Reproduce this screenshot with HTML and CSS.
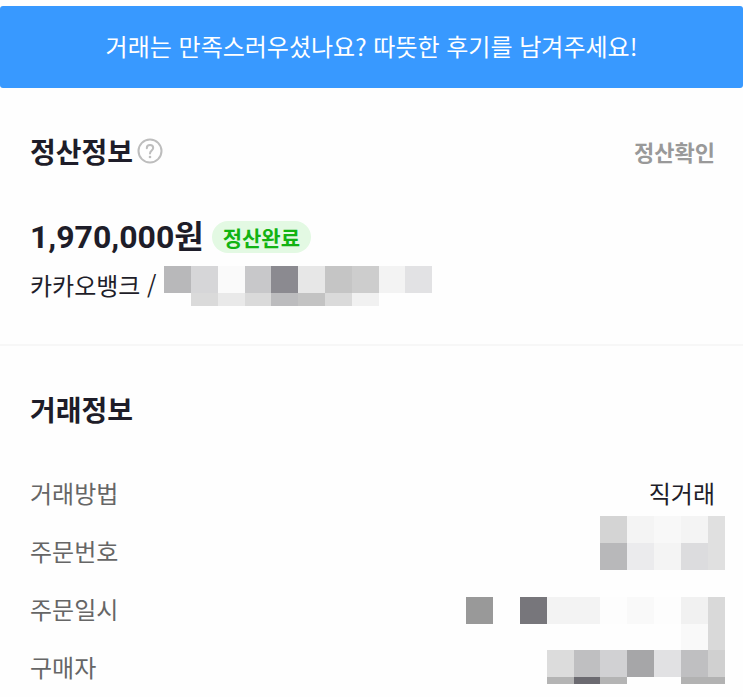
FILE: index.html
```html
<!DOCTYPE html>
<html lang="ko">
<head>
  <meta charset="UTF-8">
  <meta name="viewport" content="width=device-width, initial-scale=1.0">
  <title>거래 상세</title>
  <link rel="stylesheet" href="styles.css">
</head>
<body>

  <!-- Review banner -->
  <button type="button" class="review-banner">거래는 만족스러우셨나요? 따뜻한 후기를 남겨주세요!</button>

  <main>
    <!-- Settlement -->
    <section class="settlement">
      <div class="section-head">
        <h2>정산정보</h2>
        <button type="button" class="help-btn" aria-label="도움말">
          <svg width="26" height="26" viewBox="0 0 26 26" fill="none" stroke="#bdbdbd" stroke-width="2">
            <circle cx="13" cy="13" r="11.5"/>
            <path d="M9.8 10.2C9.8 8.2 11.1 7 13 7s3.2 1.2 3.2 3c0 2.4-3.2 2.6-3.2 5.4" stroke-linecap="round"/>
            <circle cx="13" cy="19" r="1.3" fill="#bdbdbd" stroke="none"/>
          </svg>
        </button>
        <button type="button" class="check-btn">정산확인</button>
      </div>
      <div class="amount-row">
        <strong class="amount">1,970,000원</strong>
        <span class="badge">정산완료</span>
      </div>
      <div class="account">
        <span>카카오뱅크 /</span>
        <svg class="account-mask" width="268" height="40" viewBox="0 0 268 40" shape-rendering="crispEdges" aria-hidden="true">
          <rect x="0" y="0" width="27" height="27" fill="#b8b8ba"/>
          <rect x="27" y="0" width="27" height="27" fill="#d6d6d8"/>
          <rect x="54" y="0" width="27" height="27" fill="#fafafa"/>
          <rect x="81" y="0" width="26" height="27" fill="#c8c8ca"/>
          <rect x="107" y="0" width="27" height="27" fill="#8b8a90"/>
          <rect x="134" y="0" width="27" height="27" fill="#e7e7e7"/>
          <rect x="161" y="0" width="27" height="27" fill="#c5c5c5"/>
          <rect x="188" y="0" width="27" height="27" fill="#cdcdcd"/>
          <rect x="215" y="0" width="26" height="27" fill="#f3f3f3"/>
          <rect x="241" y="0" width="27" height="27" fill="#e2e2e4"/>
          <rect x="27" y="27" width="27" height="13" fill="#dadada"/>
          <rect x="54" y="27" width="27" height="13" fill="#e9e9e9"/>
          <rect x="81" y="27" width="26" height="13" fill="#dadada"/>
          <rect x="107" y="27" width="27" height="13" fill="#bcbcbe"/>
          <rect x="134" y="27" width="27" height="13" fill="#c3c3c3"/>
          <rect x="161" y="27" width="27" height="13" fill="#dadada"/>
          <rect x="188" y="27" width="27" height="13" fill="#f1f1f1"/>
        </svg>
      </div>
    </section>

    <!-- Deal -->
    <section class="deal">
      <div class="section-head">
        <h2>거래정보</h2>
      </div>
      <dl class="deal-list">
        <div class="deal-row"><dt>거래방법</dt><dd>직거래</dd></div>
        <div class="deal-row"><dt>주문번호</dt><dd></dd></div>
        <div class="deal-row"><dt>주문일시</dt><dd></dd></div>
        <div class="deal-row"><dt>구매자</dt><dd></dd></div>
      </dl>
      <!-- hides the private values -->
      <svg class="deal-mask" width="259" height="168" viewBox="0 0 259 168" shape-rendering="crispEdges" aria-hidden="true">
        <!-- order number -->
        <rect x="134" y="0" width="27" height="27" fill="#d4d4d4"/>
        <rect x="161" y="0" width="27" height="27" fill="#f4f4f4"/>
        <rect x="188" y="0" width="27" height="27" fill="#f8f8f8"/>
        <rect x="215" y="0" width="27" height="27" fill="#f4f4f4"/>
        <rect x="242" y="0" width="17" height="54" fill="#e0e0e0"/>
        <rect x="134" y="27" width="27" height="27" fill="#b8b8ba"/>
        <rect x="161" y="27" width="27" height="27" fill="#ebebed"/>
        <rect x="188" y="27" width="27" height="27" fill="#f4f4f4"/>
        <rect x="215" y="27" width="27" height="27" fill="#dcdcde"/>
        <!-- order date -->
        <rect x="0" y="81" width="27" height="27" fill="#999999"/>
        <rect x="54" y="81" width="27" height="27" fill="#77767b"/>
        <rect x="81" y="81" width="53" height="27" fill="#f3f3f3"/>
        <rect x="134" y="81" width="27" height="27" fill="#fdfdfd"/>
        <rect x="161" y="81" width="27" height="27" fill="#f9f9f9"/>
        <rect x="188" y="81" width="27" height="27" fill="#fdfdfd"/>
        <rect x="215" y="81" width="27" height="27" fill="#f1f1f1"/>
        <rect x="215" y="108" width="27" height="26" fill="#f9f9f9"/>
        <rect x="242" y="81" width="17" height="53" fill="#d9d9d9"/>
        <!-- buyer -->
        <rect x="81" y="134" width="27" height="27" fill="#dcdcdc"/>
        <rect x="108" y="134" width="26" height="27" fill="#bfbfc1"/>
        <rect x="134" y="134" width="27" height="27" fill="#d1d1d3"/>
        <rect x="161" y="134" width="27" height="27" fill="#a6a6a8"/>
        <rect x="188" y="134" width="27" height="27" fill="#e1e1e3"/>
        <rect x="215" y="134" width="27" height="27" fill="#bfbfc1"/>
        <rect x="242" y="134" width="17" height="27" fill="#d0d0d0"/>
        <rect x="81" y="161" width="27" height="7" fill="#b4b4b4"/>
        <rect x="108" y="161" width="26" height="7" fill="#6b6a70"/>
        <rect x="134" y="161" width="27" height="7" fill="#b4b4b4"/>
        <rect x="215" y="161" width="44" height="7" fill="#b2b2b2"/>
      </svg>
    </section>
  </main>

</body>
</html>
```
FILE: styles.css
```css
* {
  box-sizing: border-box;
}
body {
  margin: 0;
  padding-top: 6px;
  background-color: #fefefe;
  color: #1e1d29;
  font-family: "Noto Sans CJK KR", sans-serif;
  font-size: 24px;
}
button {
  border: none;
  padding: 0;
  background: none;
  font-family: inherit;
  cursor: pointer;
}
.review-banner {
  display: block;
  width: 100%;
  padding: 22px 16px 24px;
  border-radius: 3px;
  background-color: #3899ff;
  color: #fff;
  font-size: 24px;
  line-height: 36px;
}
.settlement {
  padding: 42px 28px 38px 30px;
  border-bottom: 2px solid #f7f7f7;
}
.deal {
  position: relative;
  padding: 42px 28px 0 30px;
}
.section-head {
  display: flex;
  align-items: center;
  gap: 4px;
}
h2 {
  margin: 0;
  font-size: 28px;
  font-weight: 700;
  line-height: 42px;
}
.help-btn {
  display: flex;
}
.check-btn {
  margin-left: auto;
  color: #999;
  font-size: 22px;
  font-weight: 700;
  line-height: 36px;
}
.amount-row {
  display: flex;
  align-items: center;
  gap: 8px;
  margin-top: 44px;
}
.amount {
  font-family: Roboto, "Noto Sans CJK KR", sans-serif;
  font-size: 32px;
  font-weight: 700;
  line-height: 42px;
}
.badge {
  padding: 0 11px;
  border-radius: 16px;
  background-color: #e3f9e3;
  color: #12b312;
  font-size: 21px;
  font-weight: 700;
  line-height: 32px;
}
.account {
  display: flex;
  gap: 7px;
  margin-top: 8px;
  line-height: 38px;
}
.deal-list {
  margin: 34px 0 0;
}
.deal-row {
  display: flex;
  justify-content: space-between;
  line-height: 58px;
}
.deal-row dt {
  color: #666;
}
.deal-row dd {
  margin: 0;
}
.deal-mask {
  position: absolute;
  top: 170px;
  right: 18px;
}
```
